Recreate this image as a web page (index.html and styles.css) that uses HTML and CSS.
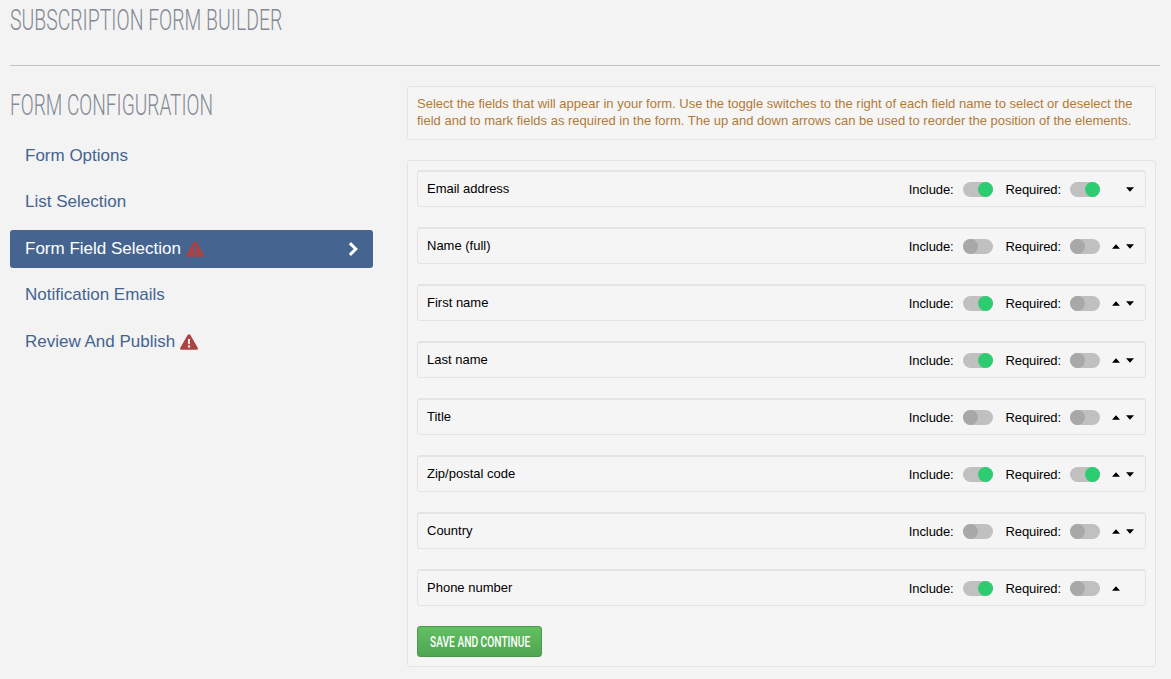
FILE: index.html
```html
<!DOCTYPE html>
<html lang="en">
<head>
<meta charset="utf-8">
<title>Subscription Form Builder</title>
<link rel="stylesheet" href="styles.css">
</head>
<body>
<svg class="defs" width="0" height="0" aria-hidden="true">
  <symbol id="warn" viewBox="0 0 18 16"><path fill="#a94442" d="M9 0.300c.6 0 1.100.3 1.400.8l7.300 12.600c.6 1-.1 2.100-1.300 2.100H1.600c-1.200 0-1.900-1.100-1.300-2.100L7.600 1.100C7.900.6 8.400.3 9 .3z"/></symbol>
  <symbol id="up" viewBox="0 0 8 5"><path d="M4 0.200 8 4.800H0z"/></symbol>
  <symbol id="down" viewBox="0 0 8 5"><path d="M0 .2h8L4 4.800z"/></symbol>
</svg>
<h1 class="page-title"><span>SUBSCRIPTION FORM BUILDER</span></h1>
<hr class="rule">
<div class="layout">
  <aside class="sidebar">
    <h2 class="side-title"><span>FORM CONFIGURATION</span></h2>
    <nav class="nav">
      <a class="nav-item">Form Options</a>
      <a class="nav-item">List Selection</a>
      <a class="nav-item active">Form Field Selection <svg class="warn" viewBox="0 0 18 16"><use href="#warn"/><path class="bang" d="M7.900 5h2.200l-.3 5.300H8.200zM7.900 11.400h2.200v2.200H7.900z"/></svg>
        <svg class="chev" viewBox="0 0 10 14"><path d="M1.900 1.100 7.800 7 1.900 12.900" fill="none" stroke="#fff" stroke-width="3"/></svg></a>
      <a class="nav-item">Notification Emails</a>
      <a class="nav-item">Review And Publish <svg class="warn" viewBox="0 0 18 16"><use href="#warn"/><path class="bang" d="M7.900 5h2.200l-.3 5.300H8.200zM7.900 11.400h2.200v2.200H7.900z"/></svg></a>
    </nav>
  </aside>
  <main class="content">
    <p class="notice">Select the fields that will appear in your form. Use the toggle switches to the right of each field name to select or deselect the field and to mark fields as required in the form. The up and down arrows can be used to reorder the position of the elements.</p>
    <section class="panel">
      <div class="row"><span class="name">Email address</span><span class="lbl">Include:</span><span class="tog on"></span><span class="lbl req">Required:</span><span class="tog on"></span><span class="arrows"><i></i><svg class="ar"><use href="#down"/></svg></span></div>
      <div class="row"><span class="name">Name (full)</span><span class="lbl">Include:</span><span class="tog"></span><span class="lbl req">Required:</span><span class="tog"></span><span class="arrows"><svg class="ar"><use href="#up"/></svg><svg class="ar"><use href="#down"/></svg></span></div>
      <div class="row"><span class="name">First name</span><span class="lbl">Include:</span><span class="tog on"></span><span class="lbl req">Required:</span><span class="tog"></span><span class="arrows"><svg class="ar"><use href="#up"/></svg><svg class="ar"><use href="#down"/></svg></span></div>
      <div class="row"><span class="name">Last name</span><span class="lbl">Include:</span><span class="tog on"></span><span class="lbl req">Required:</span><span class="tog"></span><span class="arrows"><svg class="ar"><use href="#up"/></svg><svg class="ar"><use href="#down"/></svg></span></div>
      <div class="row"><span class="name">Title</span><span class="lbl">Include:</span><span class="tog"></span><span class="lbl req">Required:</span><span class="tog"></span><span class="arrows"><svg class="ar"><use href="#up"/></svg><svg class="ar"><use href="#down"/></svg></span></div>
      <div class="row"><span class="name">Zip/postal code</span><span class="lbl">Include:</span><span class="tog on"></span><span class="lbl req">Required:</span><span class="tog on"></span><span class="arrows"><svg class="ar"><use href="#up"/></svg><svg class="ar"><use href="#down"/></svg></span></div>
      <div class="row"><span class="name">Country</span><span class="lbl">Include:</span><span class="tog"></span><span class="lbl req">Required:</span><span class="tog"></span><span class="arrows"><svg class="ar"><use href="#up"/></svg><svg class="ar"><use href="#down"/></svg></span></div>
      <div class="row"><span class="name">Phone number</span><span class="lbl">Include:</span><span class="tog on"></span><span class="lbl req">Required:</span><span class="tog"></span><span class="arrows"><svg class="ar"><use href="#up"/></svg><i></i></span></div>
      <button class="save" type="button"><span>SAVE AND CONTINUE</span></button>
    </section>
  </main>
</div>
</body>
</html>
```

FILE: styles.css
```css
* { box-sizing: border-box; }
html, body { margin: 0; height: 679px; overflow: hidden; }
body { background: #f3f3f3; font-family: "Liberation Sans", Arial, sans-serif; padding: 0 11px 0 10px; color: #000; }
.defs { position: absolute; }
.page-title, .side-title { margin: 0; font-family: Roboto, "Liberation Sans", sans-serif; font-weight: 300; color: #838a94; white-space: nowrap; font-size: 29.500px; }
.page-title span, .side-title span, .save span { display: inline-block; transform-origin: left center; }
.page-title span { transform: scaleX(0.658); }
.side-title span { transform: scaleX(0.647); }
.page-title { line-height: 40px; height: 65px; }
.rule { margin: 0; border: 0; border-top: 1px solid #c4c4c4; height: 1px; }
.layout { display: flex; gap: 34px; padding: 20px 4px 0 0; }
.sidebar { width: 363px; flex: none; }
.side-title { line-height: 38px; height: 51px; }
.nav { display: flex; flex-direction: column; gap: 8.400px; }
.nav-item { display: flex; align-items: center; height: 38px; padding: 0 15px; font-size: 17px; color: #44648f; border-radius: 3px; white-space: pre; }
.nav-item.active { background: #456590; color: #fff; }
.warn { width: 18px; height: 16px; }
.bang { fill: #f3f3f3; }
.active .bang { fill: #456590; }
.chev { width: 10px; height: 14px; margin-left: auto; }
.content { flex: 1; min-width: 0; }
.notice { margin: 0 0 20px; height: 54px; padding: 8px 9px; border: 1px solid #e4e4e4; border-radius: 3px; background: #f5f5f5; color: #b27a35; font-size: 13px; line-height: 17px; }
.panel { height: 507px; padding: 9px; border: 1px solid #e4e4e4; border-radius: 3px; background: #f5f5f5; }
.row { display: flex; align-items: center; height: 37px; margin-bottom: 20px; padding: 0 11px 0 9px; border: 1px solid #e4e4e4; border-top-width: 2px; border-radius: 3px; background: #f5f5f5; font-size: 13px; }
.name { margin-right: auto; margin-bottom: 2px; }
.lbl { margin-right: 9px; letter-spacing: -0.1px; }
.req { margin-left: 13px; }
.tog { position: relative; width: 30px; height: 15px; border-radius: 8px; background: #c0c0c0; }
.tog::after { content: ""; position: absolute; left: 0; top: 0; width: 15px; height: 15px; border-radius: 50%; background: #a8a8a8; }
.tog.on::after { left: 15px; background: #2ecc71; }
.arrows { display: flex; justify-content: space-between; align-items: center; width: 22px; margin-left: 12px; }
.arrows i { width: 8px; }
.ar { width: 8px; height: 5px; display: block; fill: #000; }
.save { display: block; width: 125px; height: 31px; padding: 0 0 0 12px; border: 1px solid #4a9a4d; border-radius: 3px; background: linear-gradient(#62c062, #4fa551); color: #fff; font-family: Roboto, "Liberation Sans", sans-serif; font-size: 15px; font-weight: 500; text-align: left; white-space: nowrap; }
.save span { transform: scaleX(0.68); }
```
